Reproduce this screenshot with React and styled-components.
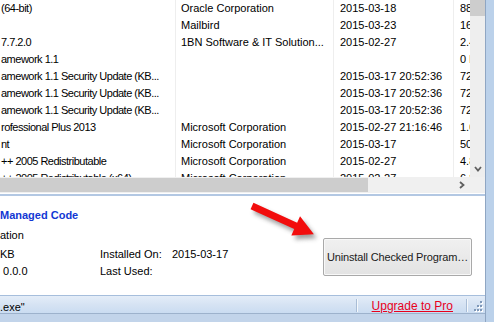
import React from 'react';
import styled, { createGlobalStyle } from 'styled-components';

const GlobalStyle = createGlobalStyle`
  html, body {
    margin: 0;
    padding: 0;
    overflow: hidden;
    background: #ffffff;
  }
  body {
    font-family: 'Liberation Sans', Arial, sans-serif;
    font-size: 11px;
    color: #000;
  }
`;

const Window = styled.div`
  display: flex;
  flex-flow: row nowrap;
  height: 322px;
  position: relative;
  width: 494px;
`;

const Client = styled.div`
  display: flex;
  flex-flow: column nowrap;
  flex: 1 1 0;
  min-width: 0;
`;

const FrameEdge = styled.div`
  background: #bbd1ea;
  border-left: 1px solid #8fa6c3;
  flex: 0 0 8px;
`;

const ListArea = styled.div`
  display: flex;
  flex-flow: row nowrap;
  height: 177px;
`;

const Grid = styled.div`
  display: grid;
  flex: 1 1 0;
  grid-auto-rows: 17px;
  grid-template-columns: 176px 158px 120px 1fr;
  overflow: hidden;
`;

const Cell = styled.div`
  border-right: ${(p) => (p.$last ? 'none' : '1px solid #eeeeee')};
  letter-spacing: ${(p) => (p.$tight ? '-0.5px' : 'normal')};
  line-height: 17px;
  overflow: hidden;
  padding-left: ${(p) => p.$pad}px;
  white-space: nowrap;
`;

const VScroll = styled.div`
  background: #eeeeee;
  display: flex;
  flex-flow: column nowrap;
  flex: 0 0 15px;
  justify-content: space-between;
`;

const VThumb = styled.div`
  background: #cdcdcd;
  height: 16px;
`;

const ArrowButton = styled.div`
  align-items: center;
  display: flex;
  flex: 0 0 auto;
  height: ${(p) => p.$h}px;
  justify-content: center;
  width: ${(p) => p.$w}px;
`;

const HScrollRow = styled.div`
  background: #f0f0f0;
  display: flex;
  flex-flow: row nowrap;
  height: 16px;
`;

const HTrack = styled.div`
  align-items: flex-start;
  display: flex;
  flex: 1 1 0;
  justify-content: space-between;
  padding-top: 1px;
`;

const HThumb = styled.div`
  background: #cdcdcd;
  height: 14px;
  width: 368px;
`;

const Corner = styled.div`
  background: #f0f0f0;
  flex: 0 0 15px;
`;

const Details = styled.div`
  background: #fff;
  border-top: 2px solid #b3c8e3;
  display: flex;
  flex: 1 1 0;
  flex-flow: row nowrap;
  margin-top: 1px;
`;

const InfoColumn = styled.div`
  display: flex;
  flex: 1 1 0;
  flex-flow: column nowrap;
  padding-top: 10px;
`;

const Title = styled.div`
  color: #1237d4;
  font-weight: bold;
  line-height: 18px;
`;

const Subtitle = styled.div`
  line-height: 18px;
  margin-top: 2px;
`;

const InfoGrid = styled.div`
  display: grid;
  grid-auto-rows: 17px;
  grid-template-columns: 100px 72px auto;
  line-height: 17px;
  margin-top: 2px;
`;

const ButtonColumn = styled.div`
  padding: 42px 13px 0 0;
`;

const Button = styled.button`
  background: linear-gradient(#f0f0f0, #e3e3e3);
  border: 1px solid #a9a9a9;
  border-radius: 2px;
  box-shadow: inset 0 0 0 1px #f8f8f8;
  color: #1a1a1a;
  font-family: 'Liberation Sans', Arial, sans-serif;
  font-size: 11px;
  height: 38px;
  letter-spacing: -0.15px;
  padding: 0;
  width: 149px;
`;

const StatusBar = styled.div`
  align-items: flex-end;
  background: linear-gradient(#e4edf8, #d6e3f3 50%, #cadcf1);
  border-top: 1px solid #a6bedc;
  display: flex;
  flex: 0 0 17px;
  flex-flow: row nowrap;
`;

const StatusText = styled.div`
  flex: 1 1 0;
  line-height: 12px;
`;

const Separator = styled.div`
  align-self: stretch;
  border-left: 1px solid #a9bdd6;
  border-right: 1px solid #f4f8fc;
  margin: 3px 0 1px;
`;

const UpgradeLink = styled.a`
  color: #e8001c;
  font-size: 12px;
  line-height: 13px;
  margin: 0 13px 0 14px;
  text-decoration: underline;
`;

const Grip = styled.div`
  height: 12px;
  margin: 0 2px 1px 4px;
  width: 11px;
`;

const BottomFrame = styled.div`
  background: #c2d4ea;
  border-top: 1px solid #9db2cc;
  flex: 0 0 8px;
`;

const Overlay = styled.svg`
  left: 0;
  pointer-events: none;
  position: absolute;
  top: 0;
`;

const rows = [
  ['(64-bit)', 'Oracle Corporation', '2015-03-18', '88.1 MB'],
  ['', 'Mailbird', '2015-03-23', '16.4 MB'],
  ['7.7.2.0', '1BN Software & IT Solution...', '2015-02-27', '2.40 MB'],
  ['amework 1.1', '', '', '0 bytes'],
  ['amework 1.1 Security Update (KB...', '', '2015-03-17 20:52:36', '72.0 KB'],
  ['amework 1.1 Security Update (KB...', '', '2015-03-17 20:52:36', '72.0 KB'],
  ['amework 1.1 Security Update (KB...', '', '2015-03-17 20:52:36', '72.0 KB'],
  ['rofessional Plus 2013', 'Microsoft Corporation', '2015-02-27 21:16:46', '1.02 GB'],
  ['nt', 'Microsoft Corporation', '2015-03-17', '506 MB'],
  ['++ 2005 Redistributable', 'Microsoft Corporation', '2015-02-27', '4.84 MB'],
  ['++ 2005 Redistributable (x64)', 'Microsoft Corporation', '2015-02-27', '6.83 MB'],
];

const pads = [1, 5, 6, 6];

const arrowShape = '0,-3.5 48,-3.5 48,-10.5 68,0 48,10.5 48,3.5 0,3.5';

function App() {
  return (
    <Window>
      <GlobalStyle />
      <Client>
        <ListArea>
          <Grid>
            {rows.map((row, i) =>
              row.map((text, j) => (
                <Cell key={`${i}-${j}`} $pad={pads[j]} $last={j === 3} $tight={j === 0}>
                  {text}
                </Cell>
              ))
            )}
          </Grid>
          <VScroll>
            <VThumb />
            <ArrowButton $w={15} $h={16}>
              <svg width="8" height="6" viewBox="0 0 8 6">
                <polyline points="1,1 4,4.5 7,1" fill="none" stroke="#606060" strokeWidth="1.8" />
              </svg>
            </ArrowButton>
          </VScroll>
        </ListArea>
        <HScrollRow>
          <HTrack>
            <HThumb />
            <ArrowButton $w={17} $h={14}>
              <svg width="6" height="8" viewBox="0 0 6 8">
                <polyline points="1,1 4.5,4 1,7" fill="none" stroke="#606060" strokeWidth="1.8" />
              </svg>
            </ArrowButton>
          </HTrack>
          <Corner />
        </HScrollRow>
        <Details>
          <InfoColumn>
            <Title>Managed Code</Title>
            <Subtitle>ation</Subtitle>
            <InfoGrid>
              <span>KB</span>
              <span>Installed On:</span>
              <span>2015-03-17</span>
              <span>&nbsp;0.0.0</span>
              <span>Last Used:</span>
              <span />
            </InfoGrid>
          </InfoColumn>
          <ButtonColumn>
            <Button>Uninstall Checked Program…</Button>
          </ButtonColumn>
        </Details>
        <StatusBar>
          <StatusText>.exe"</StatusText>
          <Separator />
          <UpgradeLink>Upgrade to Pro</UpgradeLink>
          <Separator />
          <Grip>
            <svg width="11" height="12" viewBox="0 0 11 12">
              {[[8, 1], [5, 5], [8, 5], [2, 9], [5, 9], [8, 9]].map(([x, y]) => (
                <g key={`${x}-${y}`}>
                  <rect x={x + 1} y={y + 1} width="2" height="2" fill="#ffffff" />
                  <rect x={x} y={y} width="2" height="2" fill="#7f98b8" />
                </g>
              ))}
            </svg>
          </Grip>
        </StatusBar>
        <BottomFrame />
      </Client>
      <FrameEdge />
      <Overlay width="494" height="322">
        <defs>
          <filter id="blur" x="-20%" y="-40%" width="140%" height="180%">
            <feGaussianBlur stdDeviation="2" />
          </filter>
        </defs>
        <g transform="translate(255,210) rotate(24.5)" opacity="0.5" filter="url(#blur)">
          <polygon points={arrowShape} fill="#404040" />
        </g>
        <g transform="translate(252,206) rotate(24.5)">
          <polygon points={arrowShape} fill="#f20d0d" />
        </g>
      </Overlay>
    </Window>
  );
}

export default App;
